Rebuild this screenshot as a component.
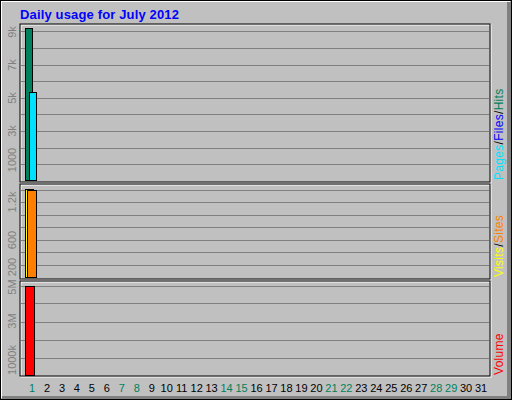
import React from "react";

const weekend = new Set([1, 7, 8, 14, 15, 21, 22, 28, 29]);

function Panel({ y0, y1, grid }: { y0: number; y1: number; grid: number[] }) {
  return (
    <g>
      <rect x={21} y={y0 + 1} width={470} height={y1 - y0} fill="none" stroke="#ffffff" />
      <rect x={20} y={y0} width={470} height={y1 - y0} fill="none" stroke="#000000" />
      {grid.map((g) => (
        <line key={g} x1={21} x2={489} y1={g + 0.5} y2={g + 0.5} stroke="#808080" />
      ))}
    </g>
  );
}

function YLabel({ y, t }: { y: number; t: string }) {
  return (
    <text x={0} y={0} transform={`translate(16 ${y}) rotate(-90)`} textAnchor="middle" fontSize={11} fill="#808080">
      {t}
    </text>
  );
}

export default function App() {
  return (
    <div className="w-[512px] h-[400px] bg-[#c0c0c0] font-['Liberation_Sans',Arial,sans-serif]">
      <svg width={512} height={400} viewBox="0 0 512 400" fontFamily="'Liberation Sans', Arial, sans-serif">
        <rect x={0.5} y={0.5} width={511} height={399} fill="#c0c0c0" stroke="#000" />
        <line x1={1.5} y1={1} x2={1.5} y2={398} stroke="#fff" />
        <line x1={1} y1={1.5} x2={510} y2={1.5} stroke="#fff" />
        <rect x={507} y={2} width={4} height={397} fill="#808080" />
        <rect x={2} y={396} width={509} height={3} fill="#808080" />
        <text x={20} y={19} fontSize={13} fontWeight="bold" fill="#0000ff" letterSpacing={0.15}>Daily usage for July 2012</text>

        <Panel y0={24} y1={182} grid={[31, 48, 65, 81, 98, 114, 131, 148, 164]} />
        <Panel y0={184} y1={279} grid={[190, 202, 215, 227, 240, 252, 265]} />
        <Panel y0={281} y1={376} grid={[286, 303, 322, 340, 358]} />

        <rect x={25.5} y={28.5} width={7} height={152} fill="#00805c" stroke="#000" />
        <rect x={29.5} y={92.5} width={7} height={88} fill="#00e0ff" stroke="#000" />
        <rect x={25.5} y={189.5} width={8} height={88} fill="#ffff00" stroke="#000" />
        <rect x={27.5} y={190.5} width={9} height={87} fill="#ff8000" stroke="#000" />
        <rect x={25.5} y={286.5} width={9} height={89} fill="#ff0000" stroke="#000" />

        <YLabel y={32} t="9k" />
        <YLabel y={65} t="7k" />
        <YLabel y={98} t="5k" />
        <YLabel y={131} t="3k" />
        <YLabel y={160} t="1000" />
        <YLabel y={202} t="1.2k" />
        <YLabel y={240} t="600" />
        <YLabel y={267} t="200" />
        <YLabel y={287} t="5M" />
        <YLabel y={321} t="3M" />
        <YLabel y={360} t="1000k" />

        {Array.from({ length: 31 }, (_, i) => i + 1).map((d) => (
          <text key={d} x={32 + 14.97 * (d - 1)} y={392} textAnchor="middle" fontSize={11} fill={weekend.has(d) ? "#00805c" : "#000"}>
            {d}
          </text>
        ))}

        <text transform="translate(503 180) rotate(-90)" fontSize={12} letterSpacing={0.3}>
          <tspan fill="#00e0ff">Pages</tspan>
          <tspan fill="#000">/</tspan>
          <tspan fill="#0000ff">Files</tspan>
          <tspan fill="#000">/</tspan>
          <tspan fill="#00805c">Hits</tspan>
        </text>
        <text transform="translate(503 277) rotate(-90)" fontSize={12} letterSpacing={0.3}>
          <tspan fill="#ffff00">Visits</tspan>
          <tspan fill="#000">/</tspan>
          <tspan fill="#ff8000">Sites</tspan>
        </text>
        <text transform="translate(503 375) rotate(-90)" fontSize={12} letterSpacing={0.3} fill="#ff0000">Volume</text>
      </svg>
    </div>
  );
}
